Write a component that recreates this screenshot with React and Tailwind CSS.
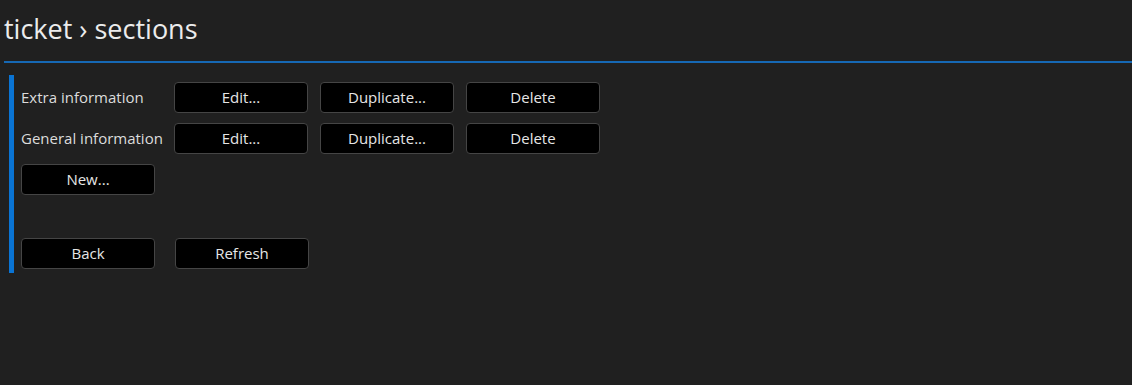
import React from 'react';

const font = { fontFamily: '"Open Sans", "Noto Sans", sans-serif' };

function Btn({ children }) {
  return (
    <button className="w-[134px] h-[31px] rounded-[4px] border border-[#454545] bg-black text-[15px] text-[#e6e6e6] leading-none">
      {children}
    </button>
  );
}

const sections = ['Extra information', 'General information'];

export default function App() {
  return (
    <div className="w-[1132px] h-[385px] bg-[#202020] overflow-hidden" style={font}>
      <div className="h-[61px] pl-[4px] flex items-start pt-[11px]">
        <h1 className="text-[27px] text-[#ececec] font-normal leading-[36px]">ticket › sections</h1>
      </div>
      <div className="ml-[4px] h-[2px] bg-[#1668b4]"></div>

      <div className="ml-[9px] mt-[12px] flex">
        <div className="w-[5px] h-[198px] bg-[#0a74d4]"></div>
        <div className="pl-[7px] pt-[7px] flex flex-col">
          {sections.map((s) => (
            <div key={s} className="flex items-center h-[31px] mb-[10px]">
              <span className="w-[153px] shrink-0 text-[15px] text-[#dcdcdc]">{s}</span>
              <div className="flex gap-[12px]">
                <Btn>Edit...</Btn>
                <Btn>Duplicate...</Btn>
                <Btn>Delete</Btn>
              </div>
            </div>
          ))}
          <div className="flex">
            <Btn>New...</Btn>
          </div>
          <div className="flex gap-[20px] mt-[43px]">
            <Btn>Back</Btn>
            <Btn>Refresh</Btn>
          </div>
        </div>
      </div>
    </div>
  );
}
